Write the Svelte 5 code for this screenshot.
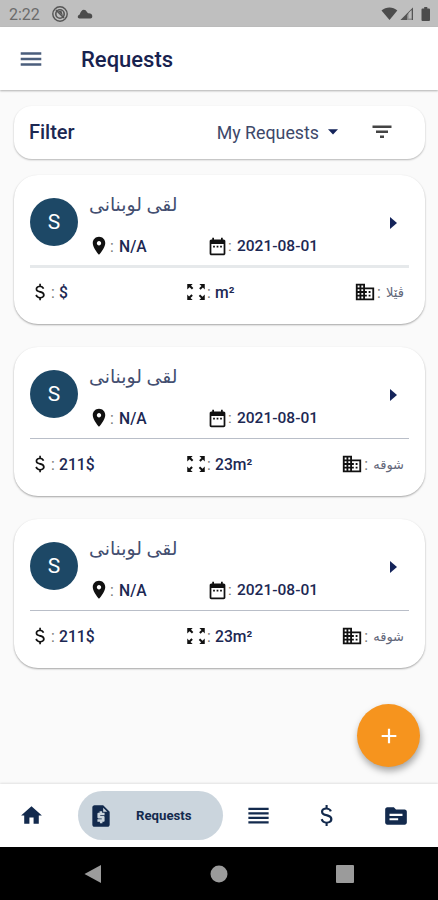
<script>
	const icons = {
		menu: 'M2.500 18.300h19v-2.300H2.500v2.300zm0-5.200h19v-2.300H2.500v2.300zm0-7.400v2.300h19V5.700H2.500z',
		filter: 'M10 18h4v-2.400h-4v2.400zM2.500 5.600v2.400h19V5.600H2.500zm3.500 7.400h12v-2.400H6v2.400z',
		place: 'M12 1C7.600 1 4.500 4.500 4.500 8.600c0 5.600 7.500 14 7.500 14s7.500-8.400 7.500-14C19.500 4.500 16.400 1 12 1zm0 10.300c-1.500 0-2.600-1.200-2.600-2.600S10.500 6 12 6s2.600 1.200 2.600 2.600-1.100 2.700-2.600 2.700z',
		date: 'M9 11H7v2h2v-2zm4 0h-2v2h2v-2zm4 0h-2v2h2v-2zm2-7h-1V2h-2v2H8V2H6v2H5c-1.110 0-1.990.9-1.990 2L3 20c0 1.100.89 2 2 2h14c1.100 0 2-.9 2-2V6c0-1.100-.9-2-2-2zm0 16H5V9h14v11z',
		money: 'M12.900 10.900c-3.200-.8-4.100-1.400-4.100-2.600 0-1.300 1.200-2.100 3.100-2.100 1.800 0 2.900.8 3.200 2.200l2-.7c-.5-1.700-1.800-2.800-4-3.200V2h-2v2.400C8.500 4.700 6.700 6.200 6.700 8.400c0 2.600 2.100 3.600 5 4.400 3 .8 3.800 1.600 3.800 2.900 0 1.500-1.300 2.200-3.300 2.200-2.100 0-3.300-1-3.800-2.800l-2 .8c.6 2.100 2.200 3.400 4.700 3.800V22h2v-2.300c2.900-.3 4.600-1.800 4.600-4.100 0-2.900-2.300-3.900-4.800-4.700z',
		area: 'M1.500 2.500h6.500L6 4.500l2.800 2.800-1.700 1.700-2.800-2.800-2.800 2.800zM22.500 2.500V9l-2.200-2.300-2.800 2.500-1.700-1.700 2.800-2.700L16 2.500zM1.500 21.500V15l2.200 2.300 2.800-2.500 1.700 1.700-2.800 2.700L8 21.500zM22.500 21.500H16l2.100-2.100-2.800-2.700 1.700-1.700 2.800 2.800 2.700-2.800z',
		building: 'M12 7V3H2v18h20V7H12zM6 19H4v-2h2v2zm0-4H4v-2h2v2zm0-4H4V9h2v2zm0-4H4V5h2v2zm4 12H8v-2h2v2zm0-4H8v-2h2v2zm0-4H8V9h2v2zm0-4H8V5h2v2zm10 12h-8v-2h2v-2h-2v-2h2v-2h-2V9h8v10zm-2-8h-2v2h2v-2zm0 4h-2v2h2v-2z',
		add: 'M20 13.200h-6.800V20h-2.400v-6.800H4v-2.400h6.800V4h2.400v6.800H20v2.400z',
		home: 'M10 20v-6h4v6h5v-8h3L12 3 2 12h3v8z',
		request: 'M14 2H6C4.900 2 4.010 2.900 4.010 4L4 20c0 1.100.89 2 1.990 2H18c1.100 0 2-.9 2-2V8l-6-6zM15.300 11.300h-4v.7h3c.6 0 1 .4 1 1v3.300c0 .6-.4 1-1 1h-1v1.400h-2.300v-1.400H8.700V15h4v-.8h-3c-.6 0-1-.4-1-1V10c0-.6.4-1 1-1h1V7.600H13V9h2.300v2.300zM14 4.300V8h3.700z',
		list: 'M3 15h18v-2H3v2zm0 4h18v-2H3v2zm0-8h18V9H3v2zm0-6v2h18V5H3z',
		folder: 'M20 6h-8l-2-2H4c-1.100 0-1.990.9-1.990 2L2 18c0 1.100.9 2 2 2h16c1.100 0 2-.9 2-2V8c0-1.100-.9-2-2-2zm-6 10H6v-2h8v2zm4-4H6v-2h12v2z'
	};

	const requests = [
		{ id: 1, price: '$', size: 'm²', type: 'ڤێلا' },
		{ id: 2, price: '211$', size: '23m²', type: 'شوقه' },
		{ id: 3, price: '211$', size: '23m²', type: 'شوقه' }
	];
</script>

{#snippet icon(name, size)}
	<svg class="icon" viewBox="0 0 24 24" width={size} height={size}>
		<path d={icons[name]} fill-rule="evenodd" />
	</svg>
{/snippet}

<div class="screen">
	<div class="status">
		<span class="time">2:22</span>
		<svg class="dnd" viewBox="0 0 16 16" width="16" height="16">
			<circle cx="8" cy="8" r="7.200" fill="none" stroke="#555" stroke-width="1.400" />
			<circle cx="8" cy="8" r="4.200" fill="none" stroke="#555" stroke-width="1.600" />
			<path d="M4 4l8 8" stroke="#555" stroke-width="1.600" />
			<path d="M6 5h3.500l1.500 5z" fill="#555" />
		</svg>
		<svg class="cloud" viewBox="0 0 16 10" width="16" height="10">
			<path d="M2.500 9.500C.3 9.500 0 6.500 2.700 5.500 3.500 2 6-.5 8.600 1.200L11 4.200c2.500-.3 4.300 1 4.300 3 0 1.300-.8 2.300-2 2.300z" fill="#4c4c4c" />
		</svg>
		<span class="spacer"></span>
		<svg viewBox="0 0 50 16" width="50" height="16">
			<path d="M.5 4.500C5 .5 12 .5 16.300 4.500L8.500 14z" fill="#4c4c4c" />
			<path d="M32 1.500V14H19.500z" fill="#8c8c8c" />
			<path d="M26 7.500V14h-6.500zM32 1.500V14h-1.200V2.700zM19.500 14L32 1.500V3L21 14z" fill="#555" />
			<path d="M27.500 7v5.500h3V4z" fill="#bbb" />
			<path d="M40.500 3.500q0-1 1-1h1.700V1h3.100v1.500H48q1 0 1 1V14q0 1-1 1h-6.500q-1 0-1-1z" fill="#4c4c4c" />
		</svg>
	</div>

	<header>
		{@render icon('menu', 26)}
		<h1>Requests</h1>
	</header>

	<main>
		<div class="filter">
			<b>Filter</b>
			<span class="select">My Requests</span>
			<svg class="caret" viewBox="0 0 10 6" width="10" height="6"><path d="M0 .3h10L5 5.500z" /></svg>
			{@render icon('filter', 24)}
		</div>

		{#each requests as r (r.id)}
			<div class="card">
				<div class="top">
					<div class="avatar">S</div>
					<div class="info">
						<div class="name"><span dir="rtl">لقى لوبنانى</span></div>
						<div class="meta">
							<span class="item">{@render icon('place', 20)}<i>:</i>N/A</span>
							<span class="item date">{@render icon('date', 21)}<i>:</i>2021-08-01</span>
						</div>
					</div>
					<svg class="arrow" viewBox="0 0 7 12" width="7" height="12"><path d="M0 0l7 6-7 6z" /></svg>
				</div>
				<div class="line" class:thick={r.id === 1}></div>
				<div class="details">
					<span class="item price">{@render icon('money', 20)}<i>:</i>{r.price}</span>
					<span class="item area">{@render icon('area', 20)}<i>:</i>{r.size}</span>
					<span class="item type">{@render icon('building', 22)}<i>:</i><span class="kurdish" dir="rtl">{r.type}</span></span>
				</div>
			</div>
		{/each}

		<button class="fab" aria-label="Add request">{@render icon('add', 22)}</button>
	</main>

	<nav>
		<span class="tab">{@render icon('home', 25)}</span>
		<span class="active">{@render icon('request', 26)}<b>Requests</b></span>
		<span class="tab">{@render icon('list', 27)}</span>
		<span class="tab">{@render icon('money', 25)}</span>
		<span class="tab">{@render icon('folder', 26)}</span>
	</nav>

	<div class="system">
		<svg viewBox="0 0 18 20" width="18" height="20"><path d="M17 1v18L.5 10z" /></svg>
		<svg viewBox="0 0 18 18" width="18" height="18"><circle cx="9" cy="9" r="8.500" /></svg>
		<svg viewBox="0 0 18 18" width="18" height="18"><rect width="18" height="18" rx="1" /></svg>
	</div>
</div>

<style>
	:global(body) {
		margin: 0;
	}

	.screen {
		width: 438px;
		height: 900px;
		display: flex;
		flex-direction: column;
		overflow: hidden;
		background: #fafafa;
		color: #1c2853;
		font-family: Roboto, "DejaVu Sans", sans-serif;
	}

	svg {
		display: block;
		flex: none;
	}

	.icon {
		fill: currentColor;
	}

	.status {
		height: 27px;
		box-sizing: border-box;
		padding: 1px 7px 0 9px;
		display: flex;
		align-items: center;
		background: #bfbfbf;
		color: #6b6b6b;
		font-size: 16px;
	}

	.dnd {
		margin-left: 12px;
	}

	.cloud {
		margin-left: 9px;
	}

	.spacer {
		flex: 1;
	}

	header {
		height: 63px;
		display: flex;
		align-items: center;
		padding-left: 18px;
		background: #fff;
		color: #4b5e7c;
		box-shadow: 0 1px 2px rgba(0, 0, 0, 0.3);
	}

	h1 {
		margin: 1px 0 0 37px;
		color: #18224f;
		font-size: 22px;
		font-weight: 500;
	}

	main {
		position: relative;
		flex: 1;
		padding: 16px 13px 0 14px;
	}

	.filter {
		height: 53px;
		box-sizing: border-box;
		margin-bottom: 16px;
		padding: 0 31px 1px 15px;
		display: flex;
		align-items: center;
		border-radius: 18px;
		background: #fff;
		box-shadow: 0 1px 2px rgba(0, 0, 0, 0.28);
	}

	.filter b {
		flex: 1;
		font-size: 20px;
		font-weight: 500;
	}

	.select {
		color: #3d4869;
		font-size: 17.8px;
	}

	.caret {
		margin: 0 32px 0 9px;
		fill: #14245a;
	}

	.filter .icon {
		color: #444;
	}

	.card {
		height: 149px;
		box-sizing: border-box;
		margin-bottom: 23px;
		padding: 16px;
		border-radius: 24px;
		background: #fff;
		box-shadow: 0 1px 2px rgba(0, 0, 0, 0.35);
	}

	.top {
		height: 74px;
		display: flex;
	}

	.avatar {
		width: 48px;
		height: 48px;
		margin-top: 7px;
		border-radius: 50%;
		background: #1d4866;
		color: #fff;
		font-size: 21px;
		line-height: 49px;
		text-align: center;
	}

	.info {
		flex: 1;
		padding-left: 11px;
	}

	.name {
		height: 44px;
		color: #434e70;
		font-size: 18.8px;
		line-height: 28px;
	}

	.meta {
		display: grid;
		grid-template-columns: 118px 1fr;
	}

	.item {
		display: flex;
		align-items: center;
		height: 22px;
		font-size: 15.7px;
		font-weight: 500;
		white-space: nowrap;
	}

	.item .icon {
		color: #111;
	}

	.item i {
		width: 10px;
		padding-left: 1px;
		box-sizing: border-box;
		color: #777;
		font-style: normal;
		font-weight: 400;
	}

	.date {
		font-size: 15.5px;
	}

	.date i {
		width: 9px;
		padding-left: 0;
	}

	.arrow {
		margin: 26px 12px 0 0;
		fill: #14245a;
	}

	.line {
		height: 1px;
		margin: 1px 0;
		background: #b9bec8;
	}

	.line.thick {
		height: 3px;
		margin: 0;
		background: #e6e9eb;
	}

	.details {
		display: grid;
		grid-template-columns: 156px 1fr auto;
		padding: 13px 5px 0 0;
	}

	.price i,
	.area i {
		width: 9px;
	}

	.kurdish {
		color: #626779;
		font-size: 13px;
		font-weight: 400;
	}

	.fab {
		position: absolute;
		right: 18px;
		bottom: 17px;
		width: 63px;
		height: 63px;
		padding: 0;
		display: grid;
		place-items: center;
		border: 0;
		border-radius: 50%;
		background: #f6941e;
		color: #fff;
		box-shadow: 1px 4px 7px rgba(0, 0, 0, 0.35);
	}

	nav {
		height: 63px;
		display: grid;
		grid-template-columns: 63px 175px 40px 97px 42px;
		align-items: center;
		background: #fff;
		color: #132a4d;
		box-shadow: 0 -1px 2px rgba(0, 0, 0, 0.1);
	}

	.tab {
		display: grid;
		place-items: center;
	}

	.active {
		width: 145px;
		height: 49px;
		box-sizing: border-box;
		margin-left: 15px;
		padding-left: 10px;
		display: flex;
		align-items: center;
		border-radius: 25px;
		background: #cbd5dd;
	}

	.active b {
		margin-left: 22px;
		font-size: 13.200px;
	}

	.system {
		height: 53px;
		display: flex;
		align-items: center;
		justify-content: center;
		gap: 108px;
		background: #000;
	}

	.system svg {
		fill: #9b9b9b;
	}
</style>
